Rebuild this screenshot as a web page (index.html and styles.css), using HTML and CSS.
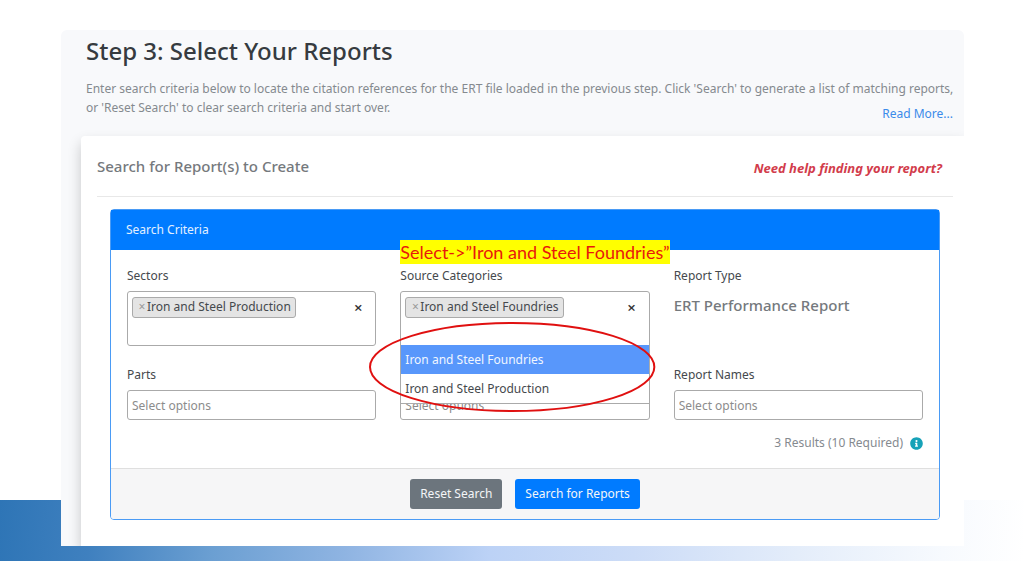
FILE: index.html
```html
<!DOCTYPE html>
<html lang="en">
<head>
<meta charset="utf-8">
<meta name="viewport" content="width=device-width, initial-scale=1">
<title>Step 3: Select Your Reports</title>
<link rel="stylesheet" href="styles.css">
</head>
<body>
<div class="slide">
  <div class="band"></div>
  <main class="panel">
    <header class="intro">
      <h1 class="title">Step 3: Select Your Reports</h1>
      <p class="lead">Enter search criteria below to locate the citation references for the ERT file loaded in the previous step. Click 'Search' to generate a list of matching reports, or 'Reset Search' to clear search criteria and start over. <a class="more" href="#">Read More...</a></p>
    </header>
    <section class="sheet">
      <div class="sheet-head">
        <h2 class="subtitle">Search for Report(s) to Create</h2>
        <a class="help" href="#">Need help finding your report?</a>
      </div>
      <form class="criteria">
        <h3 class="criteria-head">Search Criteria</h3>
        <div class="fields">
          <div class="field">
            <label class="label" for="sectors">Sectors</label>
            <div class="multi">
              <span class="tag"><button class="tag-x" type="button" aria-label="Remove">×</button>Iron and Steel Production</span>
              <button class="clear" type="button" aria-label="Clear">×</button>
              <input class="entry" id="sectors" type="text">
            </div>
          </div>
          <div class="field">
            <label class="label" for="sources">Source Categories</label>
            <div class="multi open">
              <span class="tag"><button class="tag-x" type="button" aria-label="Remove">×</button>Iron and Steel Foundries</span>
              <button class="clear" type="button" aria-label="Clear">×</button>
              <input class="entry" id="sources" type="text">
              <ul class="menu" role="listbox">
                <li class="option active" role="option" aria-selected="true">Iron and Steel Foundries</li>
                <li class="option" role="option" aria-selected="false">Iron and Steel Production</li>
              </ul>
            </div>
            <strong class="callout">Select-&gt;”Iron and Steel Foundries”</strong>
            <svg class="ring" viewBox="0 0 286 90" preserveAspectRatio="none" aria-hidden="true"><ellipse cx="143" cy="45" rx="142" ry="44"/></svg>
          </div>
          <div class="field">
            <span class="label">Report Type</span>
            <strong class="type">ERT Performance Report</strong>
          </div>
          <div class="field">
            <label class="label" for="parts">Parts</label>
            <input class="select" id="parts" type="text" placeholder="Select options">
          </div>
          <div class="field end">
            <input class="select" type="text" placeholder="Select options" aria-label="Select options">
          </div>
          <div class="field">
            <label class="label" for="names">Report Names</label>
            <input class="select" id="names" type="text" placeholder="Select options">
          </div>
          <p class="results">3 Results (10 Required)
            <svg class="info" viewBox="0 0 512 512" aria-hidden="true"><path d="M256 8C119 8 8 119 8 256s111 248 248 248 248-111 248-248S393 8 256 8zm0 110a42 42 0 1 1 0 84 42 42 0 0 1 0-84zm56 254c0 7-5 12-12 12h-88c-7 0-12-5-12-12v-24c0-7 5-12 12-12h12v-64h-12c-7 0-12-5-12-12v-24c0-7 5-12 12-12h64c7 0 12 5 12 12v100h12c7 0 12 5 12 12z"/></svg>
          </p>
        </div>
        <div class="actions">
          <button class="btn reset" type="reset">Reset Search</button>
          <button class="btn search" type="button">Search for Reports</button>
        </div>
      </form>
    </section>
  </main>
</div>
</body>
</html>
```
FILE: styles.css
```css
* {
  box-sizing: border-box;
}

body {
  margin: 0;
  background: #fff;
  color: #45494d;
  font: 12px/20px "Noto Sans", "Open Sans", sans-serif;
}

h1, h2, h3, p, ul {
  margin: 0;
  padding: 0;
}

button, input {
  font: inherit;
  color: inherit;
}

a {
  text-decoration: none;
}

.slide {
  position: relative;
  min-height: 100vh;
  padding: 30px 60px 30px 61px;
}

.band {
  position: absolute;
  left: 0;
  right: 0;
  bottom: 15px;
  height: 61px;
  background: linear-gradient(95deg, #2e75b6 0%, #3f80bf 9%, #6b9fd2 21%, #8fb4e2 34%, #bcd2f6 48%, #ccdcf7 62%, #e4edfa 78%, #f7fafe 92%, #fff 100%);
}

.panel {
  position: relative;
  overflow: hidden;
  border-radius: 6px 6px 0 0;
  background: #f8f9fb;
}

.intro {
  padding: 3px 0 12px 25px;
}

.title {
  color: #363b40;
  font-size: 24px;
  font-weight: 500;
  line-height: 36px;
}

.lead {
  display: flow-root;
  margin-top: 10px;
  color: #858a8f;
  line-height: 19px;
}

.more {
  float: right;
  margin: 6px 11px 0 0;
  color: #3b8bea;
  line-height: 20px;
}

.sheet {
  margin-left: 20px;
  padding: 0 11px 26px 16px;
  background: #fff;
  border-radius: 4px 0 0 0;
  box-shadow: 0 7px 14px rgba(0, 0, 0, 0.2);
}

.sheet-head {
  display: flex;
  align-items: center;
  justify-content: space-between;
  height: 61px;
  padding-right: 11px;
  border-bottom: 1px solid #e8e8e8;
}

.subtitle {
  color: #75797d;
  font-size: 15px;
  font-weight: 500;
}

.help {
  padding-top: 4px;
  color: #d23c4b;
  font-size: 13px;
  font-style: italic;
  font-weight: 700;
}

.criteria {
  margin: 12px 13px 0;
  border: 1px solid #4a9bf5;
  border-radius: 4px;
}

.criteria-head {
  padding: 10px 15px;
  background: #007bff;
  color: #e3f0ff;
  font-size: 12px;
  font-weight: 400;
}

.fields {
  display: grid;
  grid-template-columns: repeat(3, 1fr);
  column-gap: 24px;
  row-gap: 19px;
  padding: 16px 16px 15px;
}

.field {
  position: relative;
  display: flex;
  flex-direction: column;
  gap: 5px;
}

.end {
  justify-content: flex-end;
}

.multi {
  position: relative;
  display: grid;
  grid-template-columns: auto 30px;
  justify-content: space-between;
  align-items: center;
  height: 55px;
  padding: 4px 2px 2px 4px;
  border: 1px solid #aaa;
  border-radius: 3px;
}

.open {
  border-radius: 3px 3px 0 0;
}

.tag {
  display: flex;
  align-items: center;
  height: 21px;
  padding: 0 4px;
  border: 1px solid #aaa;
  border-radius: 3px;
  background: #e4e4e4;
}

.tag-x, .clear {
  padding: 0;
  border: 0;
  background: none;
}

.tag-x {
  width: 10px;
  color: #999;
  text-align: center;
}

.clear {
  color: #333;
  font-size: 15px;
  font-weight: 600;
}

.entry {
  grid-column: 1 / -1;
  width: 100%;
  height: 24px;
  border: 0;
  outline: 0;
  background: transparent;
}

.menu {
  position: absolute;
  z-index: 1;
  top: 53px;
  left: -1px;
  right: -1px;
  border: 1px solid #aaa;
  border-top: 0;
  background: #fff;
  list-style: none;
}

.option {
  padding: 5px 4px 4px;
}

.active {
  background: #5897fb;
  color: #f0f6ff;
}

.callout {
  position: absolute;
  z-index: 1;
  top: -26px;
  left: 0;
  background: #ff0;
  color: #e8180c;
  font: 400 18px/24px Lato, sans-serif;
  white-space: nowrap;
}

.ring {
  position: absolute;
  z-index: 2;
  top: 56px;
  left: -31px;
  width: calc(100% + 37px);
  height: 90px;
  fill: none;
  stroke: #e01010;
  stroke-width: 2px;
  pointer-events: none;
}

.type {
  color: #75797d;
  font-size: 15px;
  font-weight: 500;
  line-height: 28px;
}

.select {
  width: 100%;
  height: 30px;
  padding: 0 4px;
  border: 1px solid #aaa;
  border-radius: 3px;
  background: #fff;
}

.select::placeholder {
  color: #8c8c8c;
  opacity: 1;
}

.results {
  grid-column: 1 / -1;
  display: flex;
  align-items: center;
  justify-content: flex-end;
  gap: 7px;
  margin-top: -6px;
  color: #858a8f;
}

.info {
  width: 13px;
  height: 13px;
  fill: #17a2b8;
}

.actions {
  display: flex;
  justify-content: center;
  gap: 13px;
  padding: 10px;
  border-top: 1px solid #dfdfdf;
  border-radius: 0 0 3px 3px;
  background: #f6f6f7;
}

.btn {
  height: 30px;
  padding: 0 10px;
  border: 0;
  border-radius: 3px;
  color: #f4f6f8;
  white-space: nowrap;
}

.reset {
  background: #6c757d;
}

.search {
  background: #007bff;
}
```
